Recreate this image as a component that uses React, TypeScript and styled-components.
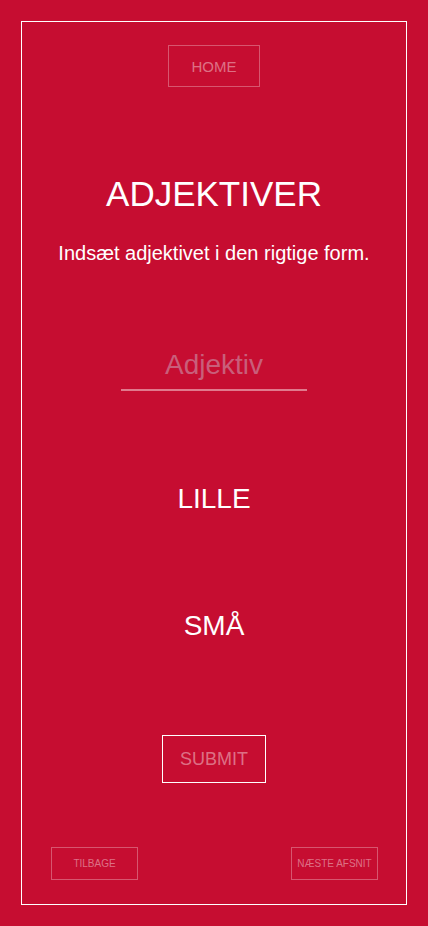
import React from "react";
import styled, { createGlobalStyle } from "styled-components";

const Global = createGlobalStyle`
  html, body {
    margin: 0;
    padding: 0;
    background: #c60d31;
  }
  body {
    font-family: "Liberation Sans", Arial, sans-serif;
  }
  * { box-sizing: border-box; }
`;

const Page = styled.div`
  padding: 21px;
  background: #c60d31;
  min-height: 926px;
`;

const Frame = styled.div`
  border: 1px solid #ffffff;
  height: 884px;
  display: flex;
  flex-direction: column;
  align-items: center;
`;

const OutlineButton = styled.button<{ $w: number; $h: number; $size: number; $solid?: boolean }>`
  width: ${(p) => p.$w}px;
  height: ${(p) => p.$h}px;
  padding: 0;
  background: transparent;
  border: 1px solid ${(p) => (p.$solid ? "#ffffff" : "rgba(255,255,255,0.3)")};
  color: rgba(255, 255, 255, 0.42);
  font-family: "Liberation Sans", Arial, sans-serif;
  font-size: ${(p) => p.$size}px;
  text-transform: uppercase;
  white-space: nowrap;
  cursor: pointer;
  display: flex;
  align-items: center;
  justify-content: center;
`;

const HomeWrap = styled.div`
  margin-top: 23px;
`;

const Title = styled.h1`
  margin: 87px 0 0;
  font-size: 35px;
  line-height: 40px;
  font-weight: 400;
  color: #ffffff;
  text-align: center;
`;

const Subtitle = styled.p`
  margin: 27px 0 0;
  font-size: 20px;
  line-height: 24px;
  color: #ffffff;
  text-align: center;
`;

const Input = styled.input`
  margin-top: 84px;
  width: 186px;
  height: 42px;
  padding: 0 0 8px;
  border: none;
  border-bottom: 2px solid rgba(255, 255, 255, 0.45);
  background: transparent;
  outline: none;
  color: #ffffff;
  font-family: "Liberation Sans", Arial, sans-serif;
  font-size: 28px;
  line-height: 32px;
  text-align: center;
  &::placeholder {
    color: rgb(201, 94, 122);
    opacity: 1;
  }
`;

const Word = styled.div<{ $top: number }>`
  margin-top: ${(p) => p.$top}px;
  font-size: 28px;
  line-height: 32px;
  color: #ffffff;
  text-align: center;
`;

const SubmitWrap = styled.div`
  margin-top: 93px;
`;

const Footer = styled.div`
  margin-top: 64px;
  align-self: stretch;
  display: flex;
  justify-content: space-between;
  padding: 0 28px 0 29px;
`;

export default function App() {
  return (
    <Page>
      <Global />
      <Frame>
        <HomeWrap>
          <OutlineButton $w={92} $h={42} $size={15}>HOME</OutlineButton>
        </HomeWrap>
        <Title>ADJEKTIVER</Title>
        <Subtitle>Indsæt adjektivet i den rigtige form.</Subtitle>
        <Input placeholder="Adjektiv" />
        <Word $top={92}>LILLE</Word>
        <Word $top={95}>SMÅ</Word>
        <SubmitWrap>
          <OutlineButton $w={104} $h={48} $size={18} $solid>SUBMIT</OutlineButton>
        </SubmitWrap>
        <Footer>
          <OutlineButton $w={87} $h={33} $size={10}>TILBAGE</OutlineButton>
          <OutlineButton $w={87} $h={33} $size={10}>NÆSTE AFSNIT</OutlineButton>
        </Footer>
      </Frame>
    </Page>
  );
}
